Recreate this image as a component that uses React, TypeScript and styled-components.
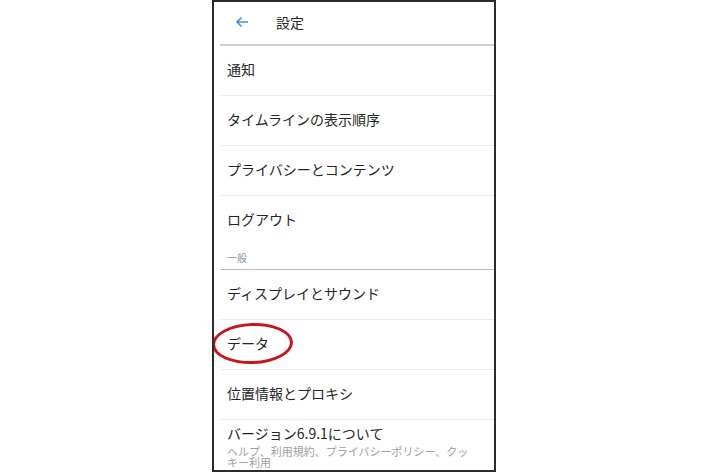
import styled, { createGlobalStyle } from "styled-components";

const GlobalStyle = createGlobalStyle`
  body {
    margin: 0;
    background: #ffffff;
    font-family: "Noto Sans CJK JP", "Noto Sans", sans-serif;
  }
`;

const Page = styled.div`
  width: 710px;
  height: 473px;
  overflow: hidden;
  background: #ffffff;
`;

const Phone = styled.div`
  position: relative;
  width: 280px;
  height: 468px;
  margin: 0 auto;
  border: 2px solid #2b2b2b;
  background: #ffffff;
  overflow: hidden;
  transform: translateX(-1px);
`;

const Header = styled.header`
  height: 44px;
  display: flex;
  align-items: center;
  box-sizing: border-box;
  padding: 0 0 2px 15px;
  margin-left: 6px;
  border-bottom: 2px solid #d2d2d2;
`;

const BackButton = styled.span`
  display: flex;
  align-items: center;
  width: 14px;
  height: 14px;
  margin-right: 27px;
`;

const Title = styled.h1`
  margin: 0;
  font-size: 14px;
  font-weight: 400;
  color: #262626;
`;

const Row = styled.div<{ $last?: boolean }>`
  position: relative;
  height: 49px;
  box-sizing: border-box;
  display: flex;
  align-items: center;
  padding: 0 0 3px 13px;
  font-size: 14px;
  color: #262626;
  &::after {
    content: "";
    display: ${(p) => (p.$last ? "none" : "block")};
    position: absolute;
    left: 6px;
    right: 0;
    bottom: -1px;
    height: 1px;
    background: #ececec;
  }
  & + & {
    margin-top: 1px;
  }
`;

const Section = styled.div`
  height: 25px;
  margin-left: 6px;
  padding: 0 0 5px 7px;
  display: flex;
  align-items: flex-end;
  box-sizing: border-box;
  font-size: 10px;
  line-height: 12px;
  color: #8796a3;
  border-bottom: 1.5px solid #bdbdbd;
`;

const AboutRow = styled.div`
  margin-top: 1px;
  padding: 4px 20px 0 13px;
  color: #262626;
`;

const AboutTitle = styled.div`
  font-size: 14px;
  line-height: 18px;
`;

const AboutSub = styled.div`
  margin-top: 4px;
  font-size: 11px;
  line-height: 11px;
  color: #a0a0a0;
`;

const Circle = styled.span`
  position: absolute;
  left: -2px;
  top: 3px;
  width: 81px;
  height: 41px;
  border: 3.5px solid #c8161d;
  border-radius: 50%;
  box-sizing: border-box;
  transform: rotate(-2deg);
`;

const items = ["通知", "タイムラインの表示順序", "プライバシーとコンテンツ"];
const general = ["ディスプレイとサウンド", "データ", "位置情報とプロキシ"];

const App = () => {
  return (
    <Page>
      <GlobalStyle />
      <Phone>
        <Header>
          <BackButton>
            <svg width="14" height="14" viewBox="0 0 14 14">
              <path
                d="M13 7H2M6.5 2.5L2 7l4.5 4.5"
                fill="none"
                stroke="#4a8fe2"
                strokeWidth="1.6"
              />
            </svg>
          </BackButton>
          <Title>設定</Title>
        </Header>
        {items.map((label) => (
          <Row key={label}>{label}</Row>
        ))}
        <Row $last>ログアウト</Row>
        <Section>一般</Section>
        {general.map((label) => (
          <Row key={label}>
            {label}
            {label === "データ" && <Circle />}
          </Row>
        ))}
        <AboutRow>
          <AboutTitle>バージョン6.9.1について</AboutTitle>
          <AboutSub>ヘルプ、利用規約、プライバシーポリシー、クッキー利用</AboutSub>
        </AboutRow>
      </Phone>
    </Page>
  );
};

export default App;
